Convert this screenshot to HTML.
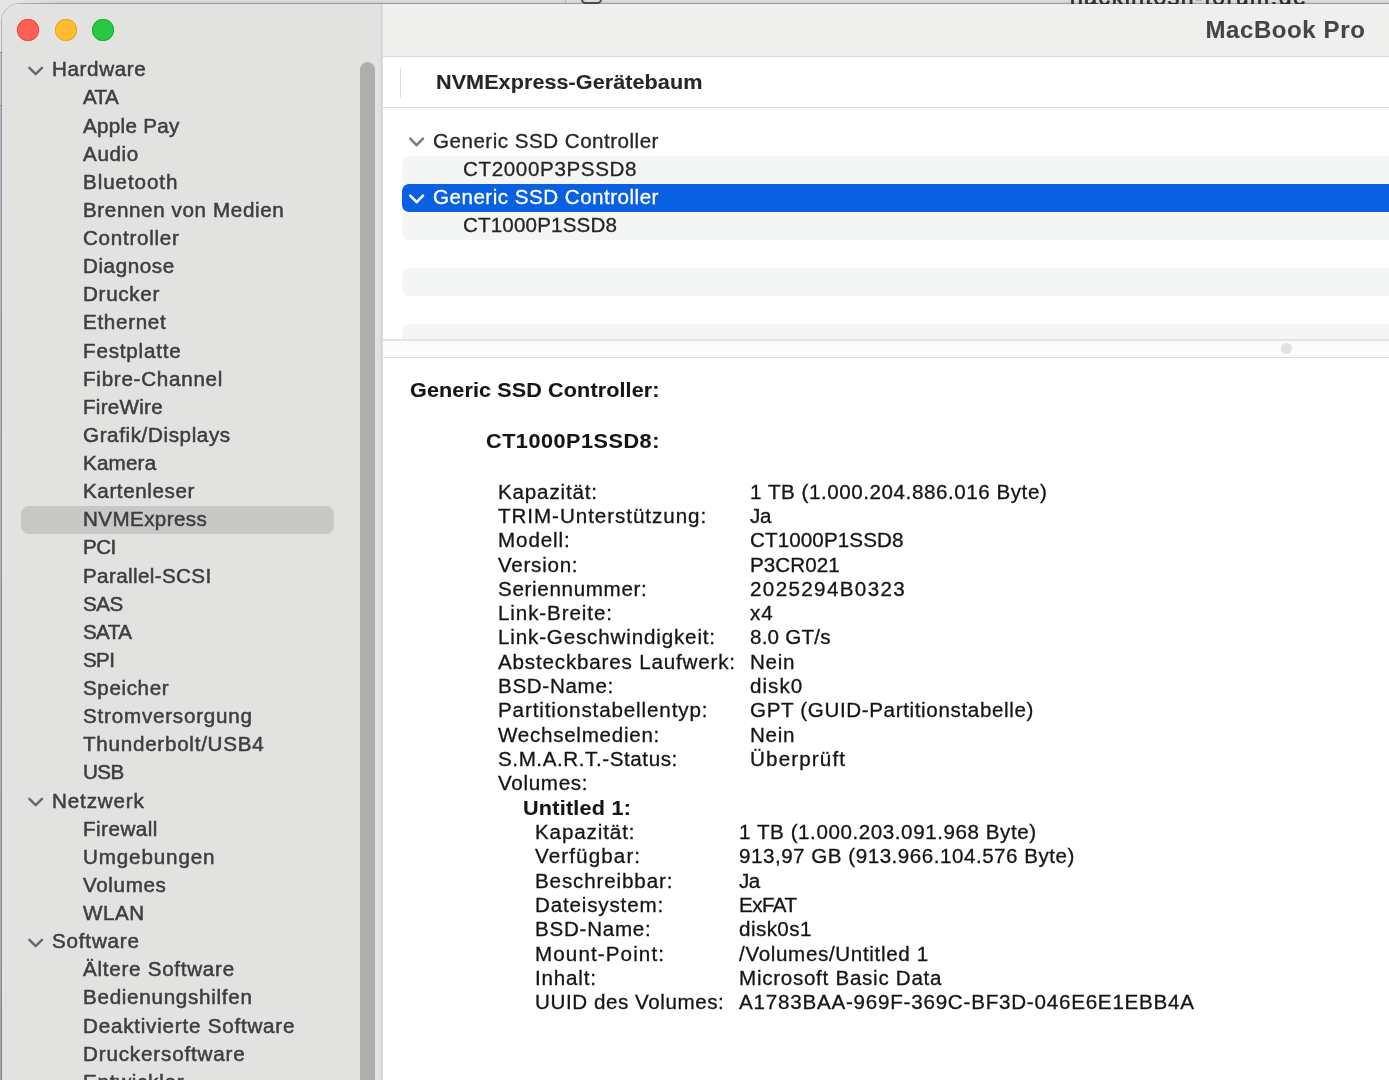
<!DOCTYPE html>
<html lang="de">
<head>
<meta charset="utf-8">
<title>MacBook Pro</title>
<style>
html,body{margin:0;padding:0;}
body{width:1389px;height:1080px;overflow:hidden;position:relative;background:#e6e6e6;font-family:"Liberation Sans",sans-serif;font-size:20.0px;}
.abs{position:absolute;}
.t{color:#151515;position:absolute;white-space:pre;line-height:28px;height:28px;transform-origin:0 0;transform:scaleX(1.03);-webkit-text-stroke:0.3px currentColor;}
#win{position:absolute;left:1.7px;top:4px;width:1400px;height:1090px;border-top-left-radius:17.5px;overflow:hidden;background:#fff;box-shadow:0 0 0 1px rgba(0,0,0,0.2);}
#win>div{position:absolute;}
#page{position:absolute;left:-1.7px;top:-4px;width:1389px;height:1080px;}
#txt{position:absolute;left:0;top:0;width:1389px;height:1080px;will-change:transform;}
#page>div,#page>svg{position:absolute;}
.b{font-weight:700;-webkit-text-stroke:0.1px currentColor;}
.s{-webkit-text-stroke:0.5px currentColor;color:#3e3e3e;}
</style>
</head>
<body>
<!-- background behind window -->
<div class="abs" style="left:0;top:0;width:1389px;height:4px;background:linear-gradient(#dedede,#d4d4d4 50%,#bfbfbf);"></div>
<div class="abs" style="left:0;top:0;width:60px;height:20px;background:linear-gradient(to right,#e5e5e5 0,#e5e5e5 14px,rgba(229,229,229,0) 60px);"></div>
<div class="abs" style="left:0;top:0;width:3px;height:52px;background:#e4e4e4;"></div>
<div class="abs" style="left:0;top:52px;width:3px;height:53px;background:#c4c4c4;border-top:1px solid #9a9a9a;"></div>
<div class="abs" style="left:0;top:105px;width:3px;height:975px;background:linear-gradient(#b3bac6,#b2b4ba 40%,#a8a8a8);border-top:1px solid #9a9a9a;"></div>
<div class="abs" style="left:580.7px;top:-13.9px;width:17px;height:14px;border:2px solid #505050;border-radius:4.5px;"></div>
<div class="abs" style="left:565px;top:0;width:1px;height:4px;background:#b8b8b8;"></div>
<div class="abs" style="left:1070.3px;top:-13.3px;height:20px;line-height:20px;font-size:23px;color:#303030;-webkit-text-stroke:0.7px #303030;letter-spacing:1.52px;white-space:pre;will-change:transform;">hackintosh-forum.de</div>

<div id="win"><div id="page">
  <!-- sidebar -->
  <div style="left:0;top:0;width:382px;height:1080px;background:#e2e2e0;"></div>
  <div style="left:378.5px;top:4px;width:4.5px;height:1076px;background:linear-gradient(to right,rgba(0,0,0,0),rgba(0,0,0,0.03) 55%,rgba(0,0,0,0.12) 76%,rgba(0,0,0,0.13));"></div>
  <!-- sidebar scrollbar -->
  <div style="left:360px;top:61.5px;width:15px;height:1100px;border-radius:7.5px;background:#aeaeac;"></div>
  <!-- selection -->
  <div style="left:20.7px;top:506.25px;width:313px;height:28px;border-radius:8px;background:#c8c8c6;"></div>
  <!-- traffic lights -->
  <div style="left:17px;top:18.8px;width:22.3px;height:22.3px;border-radius:50%;background:#ff5f57;box-shadow:inset 0 0 0 0.8px #e5483f;"></div>
  <div style="left:54.5px;top:18.8px;width:22.3px;height:22.3px;border-radius:50%;background:#febc2e;box-shadow:inset 0 0 0 0.8px #e2a327;"></div>
  <div style="left:92px;top:18.8px;width:22.3px;height:22.3px;border-radius:50%;background:#28c840;box-shadow:inset 0 0 0 0.8px #20ad31;"></div>
  <!-- toolbar -->
  <div style="left:383px;top:4px;width:1006px;height:52.5px;background:#efefed;"></div>
  <div style="left:383px;top:55.7px;width:1006px;height:1.8px;background:#dad9d7;"></div>
  <!-- header -->
  <div style="left:400px;top:68px;width:1px;height:29.5px;background:#dedede;"></div>
  <div style="left:383px;top:106.8px;width:1006px;height:1.2px;background:#dcdcdc;"></div>
  <!-- tree rows -->
  <div style="left:401.6px;top:155.6px;width:1000px;height:28.1px;border-radius:7px;background:#f4f5f5;"></div>
  <div style="left:401.6px;top:183.7px;width:1000px;height:28.1px;border-radius:7px;background:#0961e1;"></div>
  <div style="left:401.6px;top:211.8px;width:1000px;height:28.1px;border-radius:7px;background:#f4f5f5;"></div>
  <div style="left:401.6px;top:268px;width:1000px;height:28.1px;border-radius:7px;background:#f4f5f5;"></div>
  <div style="left:401.6px;top:324.2px;width:1000px;height:28.1px;border-radius:7px;background:#f4f5f5;"></div>
  <!-- splitter -->
  <div style="left:383px;top:339px;width:1006px;height:18.9px;background:linear-gradient(#e4e4e4 0,#e4e4e4 1.8px,#fafafa 2px,#fdfdfd 17.7px,#dedede 17.9px);"></div>
  <div style="left:1280.5px;top:342.8px;width:11.4px;height:11.4px;border-radius:50%;background:#e2e2e2;"></div>
  <!-- chevrons -->
  <svg style="left:26px;top:64px;" width="20" height="14" viewBox="0 0 20 14"><path d="M3.4 3.9 L9.7 10.1 L16 3.9" fill="none" stroke="#6a6a6a" stroke-width="2.5" stroke-linecap="round" stroke-linejoin="round"/></svg>
  <svg style="left:26px;top:795.25px;" width="20" height="14" viewBox="0 0 20 14"><path d="M3.4 3.9 L9.7 10.1 L16 3.9" fill="none" stroke="#6a6a6a" stroke-width="2.5" stroke-linecap="round" stroke-linejoin="round"/></svg>
  <svg style="left:26px;top:935.9px;" width="20" height="14" viewBox="0 0 20 14"><path d="M3.4 3.9 L9.7 10.1 L16 3.9" fill="none" stroke="#6a6a6a" stroke-width="2.5" stroke-linecap="round" stroke-linejoin="round"/></svg>
  <svg style="left:407px;top:135.2px;" width="20" height="14" viewBox="0 0 20 14"><path d="M3.2 3.7 L9.6 10.2 L16 3.7" fill="none" stroke="#7c7c7c" stroke-width="2.6" stroke-linecap="round" stroke-linejoin="round"/></svg>
  <svg style="left:407px;top:192.1px;" width="20" height="14" viewBox="0 0 20 14"><path d="M3.2 3.7 L9.6 10.2 L16 3.7" fill="none" stroke="#ffffff" stroke-width="2.6" stroke-linecap="round" stroke-linejoin="round"/></svg>
<div id="txt">
<span class="t s" style="left:52.40px;top:55.34px;letter-spacing:0.614px;">Hardware</span>
<span class="t s" style="left:82.80px;top:83.47px;letter-spacing:-0.593px;">ATA</span>
<span class="t s" style="left:82.80px;top:111.59px;letter-spacing:0.288px;">Apple Pay</span>
<span class="t s" style="left:82.80px;top:139.72px;letter-spacing:0.629px;">Audio</span>
<span class="t s" style="left:82.80px;top:167.84px;letter-spacing:0.892px;">Bluetooth</span>
<span class="t s" style="left:82.80px;top:195.97px;letter-spacing:0.606px;">Brennen von Medien</span>
<span class="t s" style="left:82.80px;top:224.09px;letter-spacing:0.702px;">Controller</span>
<span class="t s" style="left:82.80px;top:252.22px;letter-spacing:0.568px;">Diagnose</span>
<span class="t s" style="left:82.80px;top:280.34px;letter-spacing:0.689px;">Drucker</span>
<span class="t s" style="left:82.80px;top:308.47px;letter-spacing:0.671px;">Ethernet</span>
<span class="t s" style="left:82.80px;top:336.59px;letter-spacing:0.781px;">Festplatte</span>
<span class="t s" style="left:82.80px;top:364.72px;letter-spacing:0.715px;">Fibre-Channel</span>
<span class="t s" style="left:82.80px;top:392.84px;letter-spacing:0.258px;">FireWire</span>
<span class="t s" style="left:82.80px;top:420.97px;letter-spacing:0.596px;">Grafik/Displays</span>
<span class="t s" style="left:82.80px;top:449.09px;letter-spacing:0.194px;">Kamera</span>
<span class="t s" style="left:82.80px;top:477.22px;letter-spacing:0.586px;">Kartenleser</span>
<span class="t s" style="left:82.80px;top:505.34px;letter-spacing:0.391px;">NVMExpress</span>
<span class="t s" style="left:82.80px;top:533.47px;letter-spacing:-0.532px;">PCI</span>
<span class="t s" style="left:82.80px;top:561.59px;letter-spacing:0.368px;">Parallel-SCSI</span>
<span class="t s" style="left:82.80px;top:589.72px;letter-spacing:-0.519px;">SAS</span>
<span class="t s" style="left:82.80px;top:617.84px;letter-spacing:-0.608px;">SATA</span>
<span class="t s" style="left:82.80px;top:645.97px;letter-spacing:-0.638px;">SPI</span>
<span class="t s" style="left:82.80px;top:674.09px;letter-spacing:0.589px;">Speicher</span>
<span class="t s" style="left:82.80px;top:702.22px;letter-spacing:0.766px;">Stromversorgung</span>
<span class="t s" style="left:82.80px;top:730.34px;letter-spacing:0.724px;">Thunderbolt/USB4</span>
<span class="t s" style="left:82.80px;top:758.47px;letter-spacing:-0.534px;">USB</span>
<span class="t s" style="left:52.40px;top:786.59px;letter-spacing:0.833px;">Netzwerk</span>
<span class="t s" style="left:82.80px;top:814.72px;letter-spacing:0.461px;">Firewall</span>
<span class="t s" style="left:82.80px;top:842.84px;letter-spacing:0.840px;">Umgebungen</span>
<span class="t s" style="left:82.80px;top:870.97px;letter-spacing:0.618px;">Volumes</span>
<span class="t s" style="left:82.80px;top:899.09px;letter-spacing:0.540px;">WLAN</span>
<span class="t s" style="left:52.40px;top:927.22px;letter-spacing:0.785px;">Software</span>
<span class="t s" style="left:82.80px;top:955.34px;letter-spacing:0.713px;">Ältere Software</span>
<span class="t s" style="left:82.80px;top:983.47px;letter-spacing:0.698px;">Bedienungshilfen</span>
<span class="t s" style="left:82.80px;top:1011.59px;letter-spacing:0.761px;">Deaktivierte Software</span>
<span class="t s" style="left:82.80px;top:1039.71px;letter-spacing:0.815px;">Druckersoftware</span>
<span class="t s" style="left:82.80px;top:1067.84px;letter-spacing:0.715px;">Entwickler</span>
<span class="t b" style="left:1205.40px;top:15.70px;letter-spacing:0.605px;color:#454545;transform:scaleX(1.0);font-size:24px;">MacBook Pro</span>
<span class="t b" style="left:436.40px;top:68.39px;letter-spacing:0.050px;color:#262626;transform:scaleX(1.08);">NVMExpress-Gerätebaum</span>
<span class="t" style="left:433.30px;top:126.79px;letter-spacing:0.473px;color:#262626;">Generic SSD Controller</span>
<span class="t" style="left:462.90px;top:154.89px;letter-spacing:0.606px;color:#262626;">CT2000P3PSSD8</span>
<span class="t" style="left:433.30px;top:182.99px;letter-spacing:0.473px;color:#ffffff;">Generic SSD Controller</span>
<span class="t" style="left:462.90px;top:211.09px;letter-spacing:0.145px;color:#262626;">CT1000P1SSD8</span>
<span class="t b" style="left:410.30px;top:376.39px;letter-spacing:0.096px;transform:scaleX(1.08);">Generic SSD Controller:</span>
<span class="t b" style="left:485.50px;top:426.79px;letter-spacing:0.498px;transform:scaleX(1.08);">CT1000P1SSD8:</span>
<span class="t" style="left:497.65px;top:477.54px;letter-spacing:0.797px;">Kapazität:</span>
<span class="t" style="left:497.65px;top:501.86px;letter-spacing:0.916px;">TRIM-Unterstützung:</span>
<span class="t" style="left:497.65px;top:526.18px;letter-spacing:0.869px;">Modell:</span>
<span class="t" style="left:497.65px;top:550.50px;letter-spacing:0.712px;">Version:</span>
<span class="t" style="left:497.65px;top:574.82px;letter-spacing:0.643px;">Seriennummer:</span>
<span class="t" style="left:497.65px;top:599.14px;letter-spacing:0.863px;">Link-Breite:</span>
<span class="t" style="left:497.65px;top:623.46px;letter-spacing:0.812px;">Link-Geschwindigkeit:</span>
<span class="t" style="left:497.65px;top:647.78px;letter-spacing:0.793px;">Absteckbares Laufwerk:</span>
<span class="t" style="left:497.65px;top:672.10px;letter-spacing:0.650px;">BSD-Name:</span>
<span class="t" style="left:497.65px;top:696.42px;letter-spacing:0.843px;">Partitionstabellentyp:</span>
<span class="t" style="left:497.65px;top:720.74px;letter-spacing:0.700px;">Wechselmedien:</span>
<span class="t" style="left:497.65px;top:745.06px;letter-spacing:0.564px;">S.M.A.R.T.-Status:</span>
<span class="t" style="left:497.65px;top:769.38px;letter-spacing:0.671px;">Volumes:</span>
<span class="t" style="left:749.60px;top:477.54px;letter-spacing:0.534px;">1 TB (1.000.204.886.016 Byte)</span>
<span class="t" style="left:749.60px;top:501.86px;letter-spacing:-0.320px;">Ja</span>
<span class="t" style="left:749.60px;top:526.18px;letter-spacing:0.101px;">CT1000P1SSD8</span>
<span class="t" style="left:749.60px;top:550.50px;letter-spacing:0.077px;">P3CR021</span>
<span class="t" style="left:749.60px;top:574.82px;letter-spacing:1.325px;">2025294B0323</span>
<span class="t" style="left:749.60px;top:599.14px;letter-spacing:0.908px;">x4</span>
<span class="t" style="left:749.60px;top:623.46px;letter-spacing:0.204px;">8.0 GT/s</span>
<span class="t" style="left:749.60px;top:647.78px;letter-spacing:0.682px;">Nein</span>
<span class="t" style="left:749.60px;top:672.10px;letter-spacing:1.012px;">disk0</span>
<span class="t" style="left:749.60px;top:696.42px;letter-spacing:0.614px;">GPT (GUID-Partitionstabelle)</span>
<span class="t" style="left:749.60px;top:720.74px;letter-spacing:0.682px;">Nein</span>
<span class="t" style="left:749.60px;top:745.06px;letter-spacing:1.117px;">Überprüft</span>
<span class="t b" style="left:523.10px;top:793.70px;letter-spacing:0.221px;transform:scaleX(1.08);">Untitled 1:</span>
<span class="t" style="left:534.65px;top:818.02px;letter-spacing:0.851px;">Kapazität:</span>
<span class="t" style="left:534.65px;top:842.34px;letter-spacing:1.083px;">Verfügbar:</span>
<span class="t" style="left:534.65px;top:866.66px;letter-spacing:0.838px;">Beschreibbar:</span>
<span class="t" style="left:534.65px;top:890.98px;letter-spacing:0.802px;">Dateisystem:</span>
<span class="t" style="left:534.65px;top:915.30px;letter-spacing:0.711px;">BSD-Name:</span>
<span class="t" style="left:534.65px;top:939.62px;letter-spacing:1.073px;">Mount-Point:</span>
<span class="t" style="left:534.65px;top:963.94px;letter-spacing:0.796px;">Inhalt:</span>
<span class="t" style="left:534.65px;top:988.26px;letter-spacing:0.550px;">UUID des Volumes:</span>
<span class="t" style="left:738.80px;top:818.02px;letter-spacing:0.548px;">1 TB (1.000.203.091.968 Byte)</span>
<span class="t" style="left:738.80px;top:842.34px;letter-spacing:0.497px;">913,97 GB (913.966.104.576 Byte)</span>
<span class="t" style="left:738.80px;top:866.66px;letter-spacing:-0.466px;">Ja</span>
<span class="t" style="left:738.80px;top:890.98px;letter-spacing:-0.556px;">ExFAT</span>
<span class="t" style="left:738.80px;top:915.30px;letter-spacing:0.420px;">disk0s1</span>
<span class="t" style="left:738.80px;top:939.62px;letter-spacing:0.634px;">/Volumes/Untitled 1</span>
<span class="t" style="left:738.80px;top:963.94px;letter-spacing:0.695px;">Microsoft Basic Data</span>
<span class="t" style="left:738.80px;top:988.26px;letter-spacing:0.744px;">A1783BAA-969F-369C-BF3D-046E6E1EBB4A</span>
</div>
</div></div>
</body>
</html>
